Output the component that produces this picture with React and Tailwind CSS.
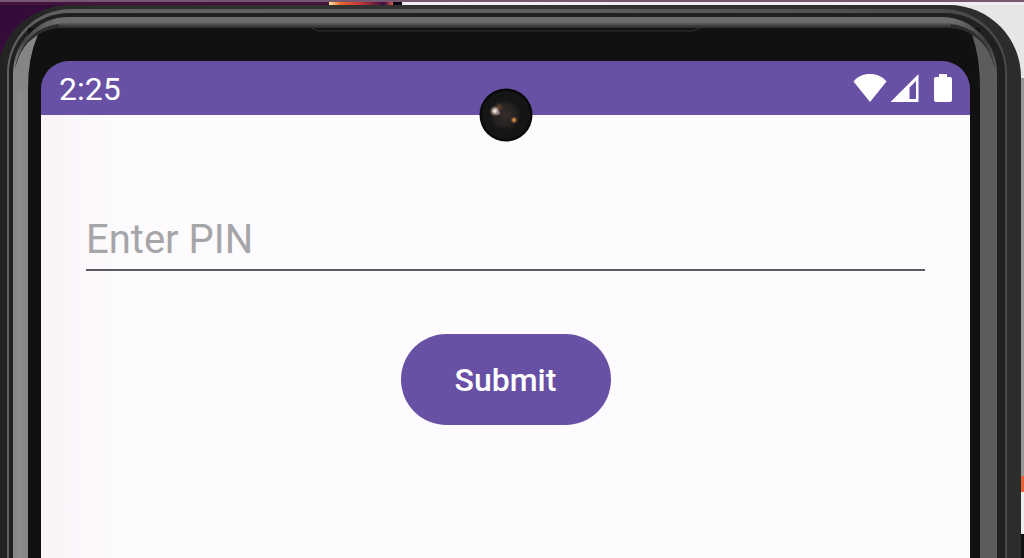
import { useState } from "react";

function WifiIcon() {
  return (
    <svg viewBox="0 0 34 30" className="h-[30px] w-[34px]" fill="currentColor">
      <path d="M17 29 0.5 8.5C4.500 3.500 10 1 17 1s12.500 2.500 16.500 7.500z" />
    </svg>
  );
}

function SignalIcon() {
  return (
    <svg viewBox="0 0 29 30" className="h-[30px] w-[29px]" fill="currentColor">
      <path fillRule="evenodd" d="M28.500 1v28H0.500zM26 8 19.500 14.500V26h6.500z" />
    </svg>
  );
}

function BatteryIcon() {
  return (
    <svg viewBox="0 0 18 30" className="h-[30px] w-[18px]" fill="currentColor">
      <path d="M5 1h8v3h3q2 0 2 2v21q0 2-2 2H2q-2 0-2-2V6q0-2 2-2h3z" />
    </svg>
  );
}

function StatusBar() {
  return (
    <header className="relative flex h-[54px] items-center justify-between bg-[#6850a4] px-[18px] text-white">
      <span className="pt-[2px] text-[32px] leading-none">2:25</span>
      <div className="flex items-center">
        <WifiIcon />
        <span className="ml-[3px]">
          <SignalIcon />
        </span>
        <span className="ml-[15px]">
          <BatteryIcon />
        </span>
      </div>
      <Camera />
    </header>
  );
}

// punch-hole camera, hangs over the lower edge of the status bar
function Camera() {
  return (
    <svg
      viewBox="0 0 54 54"
      className="absolute left-1/2 top-[27px] h-[54px] w-[54px] -translate-x-1/2"
    >
      <defs>
        <radialGradient id="lens">
          <stop offset="0" stopColor="#332c2a" />
          <stop offset="0.700" stopColor="#272322" />
          <stop offset="1" stopColor="#171717" />
        </radialGradient>
        <radialGradient id="glintA">
          <stop offset="0" stopColor="#fffdf0" />
          <stop offset="0.400" stopColor="#b9aaa0" />
          <stop offset="1" stopColor="#3a302f" stopOpacity="0" />
        </radialGradient>
        <radialGradient id="glintB">
          <stop offset="0" stopColor="#f0b050" />
          <stop offset="0.400" stopColor="#a56a2c" />
          <stop offset="1" stopColor="#3a302f" stopOpacity="0" />
        </radialGradient>
        <radialGradient id="glintC">
          <stop offset="0" stopColor="#7a4a26" />
          <stop offset="1" stopColor="#3a302f" stopOpacity="0" />
        </radialGradient>
      </defs>
      <circle cx="27" cy="27" r="26.500" fill="#0a0a0a" />
      <circle cx="27" cy="27" r="24" fill="#151515" />
      <circle cx="26" cy="27" r="15" fill="url(#lens)" />
      <circle cx="20" cy="19" r="5" fill="url(#glintC)" />
      <circle cx="16" cy="23" r="6" fill="url(#glintA)" />
      <circle cx="19" cy="25" r="2" fill="#a58aa0" opacity="0.700" />
      <circle cx="35" cy="32" r="4" fill="url(#glintB)" />
    </svg>
  );
}

function PinForm() {
  const [pin, setPin] = useState("");

  return (
    <form
      onSubmit={(e) => e.preventDefault()}
      className="flex flex-1 flex-col items-center bg-[linear-gradient(to_right,#faf3f8,#fdfbfe_80px)] px-[45px] pt-[94px]"
    >
      <input
        value={pin}
        onChange={(e) => setPin(e.target.value)}
        aria-label="Enter PIN"
        placeholder="Enter PIN"
        inputMode="numeric"
        className="h-[62px] w-full border-b-2 border-[#5c5a5e] bg-transparent text-[40px] text-[#1c1b1f] outline-none placeholder:text-[#a6a5a8]"
      />
      <button
        type="submit"
        className="mt-[63px] h-[91px] w-[210px] rounded-full bg-[#6850a4] text-[32px] font-medium text-white"
      >
        Submit
      </button>
    </form>
  );
}

// light falling on a corner of the rim, drawn for the left side
function RimCorner({ id, edge, light, dark, className }) {
  return (
    <svg viewBox="0 0 46 72" className={`absolute top-0 h-[72px] w-[46px] ${className}`}>
      <defs>
        <linearGradient id={id} gradientUnits="userSpaceOnUse" x1="0" y1="50" x2="46" y2="6">
          <stop offset="0" stopColor={light} />
          <stop offset="0.400" stopColor={dark} />
          <stop offset="1" stopColor="#6c6c6c" />
        </linearGradient>
      </defs>
      <path d="M0 72V56A56 56 0 0 1 46 1V72Z" fill={`url(#${id})`} />
      <path d="M2 50Q8 26 25 14Q36 8 46 7V12L25 19Z" fill="#2c2c2c" />
      <path d={`M0 72V66Q3 30 25 18Q${edge} 40 ${edge} 72Z`} fill={light} />
      <path d={`M${edge} 72Q${edge} 40 25 18Q34 12 46 11V72Z`} fill="#111" />
    </svg>
  );
}

function Phone({ children }) {
  return (
    <div className="-ml-[3px] mr-[3px] flex flex-1 rounded-t-[72px] bg-[linear-gradient(to_right,#222,#2e2e2e_12%,#333_50%,#2c2c2c)] pl-[10px] pr-[14px] pt-1">
      <div className="flex flex-1 rounded-t-[64px] bg-[linear-gradient(to_right,#606060_0_50%,#484848)] pl-[2px] pr-[2px] pt-1">
        <div className="flex flex-1 rounded-t-[60px] bg-[#202020] pl-1 pr-2 pt-1">
          <div className="relative flex flex-1 rounded-t-[56px] bg-[linear-gradient(to_bottom,#6c6c6c_0_5px,#303030_10px)] pt-[11px]">
            <div className="mt-[60px] w-[15px] bg-[linear-gradient(to_right,#858585,#8b8b8b_40%,#858585)]" />
            <div className="flex flex-1 flex-col bg-[#111] pl-[13px] pr-[10px]">
              <svg
                viewBox="0 0 388 8"
                className="h-2 w-[388px] self-center"
                fill="none"
              >
                <path d="M0 0 6 3H380L388 0" stroke="#333" />
              </svg>
              <div className="relative z-10 mt-[25px] flex flex-1 flex-col overflow-hidden rounded-t-[28px]">
                {children}
              </div>
            </div>
            <div className="mt-[60px] w-[17px] bg-[#5c5c5c]" />
            <RimCorner id="rimLeft" edge={15} light="#858585" dark="#444" className="left-0" />
            <RimCorner id="rimRight" edge={17} light="#5c5c5c" dark="#3c3c3c" className="right-0 -scale-x-100" />
          </div>
        </div>
      </div>
    </div>
  );
}

export default function App() {
  return (
    <div className="flex min-h-screen flex-col overflow-hidden bg-[linear-gradient(to_bottom,transparent_0_78px,#999_78px_476px,#e8623a_476px_492px,#eee_492px_534px,#111_534px),linear-gradient(to_right,#350b3a_0_402px,#e6e6e6_402px)] bg-[length:3px_100%,100%_100%] bg-[position:right_top,left_top] bg-no-repeat font-[Roboto,sans-serif]">
      <div className="h-[2px] bg-[#75586f]" />
      <div className="flex h-[3px]">
        <div className="w-[329px] bg-[#44123f]" />
        <div className="w-[64px] bg-[linear-gradient(to_right,#ffe9a0,#e8642c_12px,#c23a38_30px,#3a0c40_55px,#e0604a)]" />
        <div className="w-[9px] bg-[#0c0714]" />
        <div className="flex-1 bg-[#f1eef1]" />
      </div>
      <Phone>
        <StatusBar />
        <PinForm />
      </Phone>
    </div>
  );
}
